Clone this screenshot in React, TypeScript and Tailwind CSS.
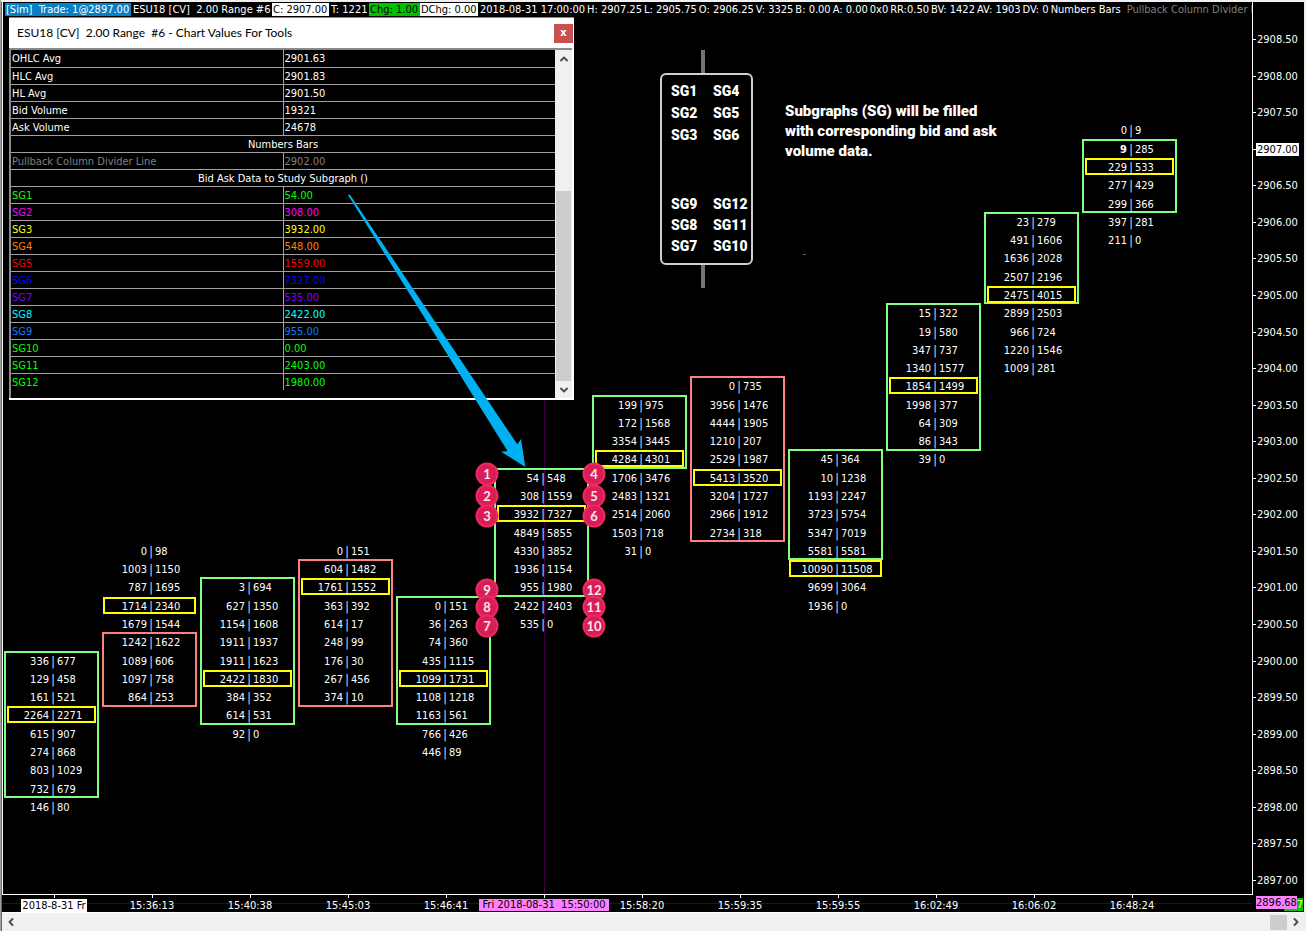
import React from 'react';
import { ChevronDown, ChevronLeft, ChevronRight, ChevronUp } from 'lucide-react';

type Bar = {
  time: string;
  top: number;
  rows: string[];
  box: [number, number];
  down?: boolean;
  poc: number;
};

const TICK = 0.25;
const MAX_PRICE = 2908.5;
const PX_PER_POINT = 73.13;

const bars: Bar[] = [
  {
    time: '2018-8-31 Fr',
    top: 2900,
    rows: ['336|677', '129|458', '161|521', '2264|2271', '615|907', '274|868', '803|1029', '732|679', '146|80'],
    box: [0, 7],
    poc: 3,
  },
  {
    time: '15:36:13',
    top: 2901.5,
    rows: ['0|98', '1003|1150', '787|1695', '1714|2340', '1679|1544', '1242|1622', '1089|606', '1097|758', '864|253'],
    box: [5, 8],
    down: true,
    poc: 3,
  },
  {
    time: '15:40:38',
    top: 2901,
    rows: ['3|694', '627|1350', '1154|1608', '1911|1937', '1911|1623', '2422|1830', '384|352', '614|531', '92|0'],
    box: [0, 7],
    poc: 5,
  },
  {
    time: '15:45:03',
    top: 2901.5,
    rows: ['0|151', '604|1482', '1761|1552', '363|392', '614|17', '248|99', '176|30', '267|456', '374|10'],
    box: [1, 8],
    down: true,
    poc: 2,
  },
  {
    time: '15:46:41',
    top: 2900.75,
    rows: ['0|151', '36|263', '74|360', '435|1115', '1099|1731', '1108|1218', '1163|561', '766|426', '446|89'],
    box: [0, 6],
    poc: 4,
  },
  {
    time: 'Fri 2018-08-31  15:50:00',
    top: 2902.5,
    rows: ['54|548', '308|1559', '3932|7327', '4849|5855', '4330|3852', '1936|1154', '955|1980', '2422|2403', '535|0'],
    box: [0, 6],
    poc: 2,
  },
  {
    time: '15:58:20',
    top: 2903.5,
    rows: ['199|975', '172|1568', '3354|3445', '4284|4301', '1706|3476', '2483|1321', '2514|2060', '1503|718', '31|0'],
    box: [0, 3],
    poc: 3,
  },
  {
    time: '15:59:35',
    top: 2903.75,
    rows: ['0|735', '3956|1476', '4444|1905', '1210|207', '2529|1987', '5413|3520', '3204|1727', '2966|1912', '2734|318'],
    box: [0, 8],
    down: true,
    poc: 5,
  },
  {
    time: '15:59:55',
    top: 2902.75,
    rows: ['45|364', '10|1238', '1193|2247', '3723|5754', '5347|7019', '5581|5581', '10090|11508', '9699|3064', '1936|0'],
    box: [0, 5],
    poc: 6,
  },
  {
    time: '16:02:49',
    top: 2904.75,
    rows: ['15|322', '19|580', '347|737', '1340|1577', '1854|1499', '1998|377', '64|309', '86|343', '39|0'],
    box: [0, 7],
    poc: 4,
  },
  {
    time: '16:06:02',
    top: 2906,
    rows: ['23|279', '491|1606', '1636|2028', '2507|2196', '2475|4015', '2899|2503', '966|724', '1220|1546', '1009|281'],
    box: [0, 4],
    poc: 4,
  },
  {
    time: '16:48:24',
    top: 2907.25,
    rows: ['0|9', '9|285', '229|533', '277|429', '299|366', '397|281', '211|0'],
    box: [1, 4],
    poc: 2,
  },
];

const LAST_PRICE = 2907;
const prices = Array.from({ length: 24 }, (_, i) => MAX_PRICE - i * 0.5);

const values = [
  { name: 'OHLC Avg', value: '2901.63', color: 'text-white' },
  { name: 'HLC Avg', value: '2901.83', color: 'text-white' },
  { name: 'HL Avg', value: '2901.50', color: 'text-white' },
  { name: 'Bid Volume', value: '19321', color: 'text-white' },
  { name: 'Ask Volume', value: '24678', color: 'text-white' },
  { name: 'Numbers Bars' },
  { name: 'Pullback Column Divider Line', value: '2902.00', color: 'text-[#808080]' },
  { name: 'Bid Ask Data to Study Subgraph ()' },
  { name: 'SG1', value: '54.00', color: 'text-[#00ff00]' },
  { name: 'SG2', value: '308.00', color: 'text-[#ff00ff]' },
  { name: 'SG3', value: '3932.00', color: 'text-[#ffff00]' },
  { name: 'SG4', value: '548.00', color: 'text-[#ff8000]' },
  { name: 'SG5', value: '1559.00', color: 'text-[#ff0000]' },
  { name: 'SG6', value: '7327.00', color: 'text-[#0000ff]' },
  { name: 'SG7', value: '535.00', color: 'text-[#8000ff]' },
  { name: 'SG8', value: '2422.00', color: 'text-[#00ffff]' },
  { name: 'SG9', value: '955.00', color: 'text-[#0080ff]' },
  { name: 'SG10', value: '0.00', color: 'text-[#00ff00]' },
  { name: 'SG11', value: '2403.00', color: 'text-[#00ff00]' },
  { name: 'SG12', value: '1980.00', color: 'text-[#00ff00]' },
];

const stats = [
  '2018-08-31 17:00:00',
  'H: 2907.25',
  'L: 2905.75',
  'O: 2906.25',
  'V: 3325',
  'B: 0.00',
  'A: 0.00',
  '0x0',
  'RR:0.50',
  'BV: 1422',
  'AV: 1903',
  'DV: 0',
  'Numbers Bars',
];

// badge centres in plot pixels
const badges = [
  { n: 1, x: 484, y: 457 },
  { n: 2, x: 484, y: 479 },
  { n: 3, x: 484, y: 499 },
  { n: 4, x: 591, y: 457 },
  { n: 5, x: 591, y: 479 },
  { n: 6, x: 591, y: 499 },
  { n: 9, x: 484, y: 573 },
  { n: 8, x: 484, y: 590 },
  { n: 7, x: 484, y: 609 },
  { n: 12, x: 591, y: 573 },
  { n: 11, x: 591, y: 590 },
  { n: 10, x: 591, y: 609 },
];

const yOf = (price: number) => (MAX_PRICE - price) * PX_PER_POINT + 22;

function StatusLine() {
  return (
    <header className="flex h-[15px] items-center overflow-hidden whitespace-pre pl-[2px] leading-[13px]">
      <span className="w-[126px] shrink-0 bg-[#0a80c4] pl-px">[Sim]  Trade: 1@2897.00</span>
      <span className="w-[141px] shrink-0 pl-[2px]">ESU18 [CV]  2.00 Range #6</span>
      <span className="w-[57px] shrink-0 bg-white pl-px text-black">C: 2907.00</span>
      <span className="w-[40px] shrink-0 pl-[2px]">T: 1221</span>
      <span className="w-[51px] shrink-0 bg-[#00c000] pl-px text-black">Chg: 1.00</span>
      <span className="w-[58px] shrink-0 bg-white pl-px text-black">DChg: 0.00</span>
      <div className="flex shrink-0 gap-[2px] pl-[2px]">
        {stats.map((s) => (
          <span key={s}>{s}</span>
        ))}
        <span className="pl-1 text-[#808080]">Pullback Column Divider Line</span>
      </div>
    </header>
  );
}

function NumbersBar({ bar }: { bar: Bar }) {
  const rowY = (i: number) => yOf(bar.top - i * TICK);
  const boxTop = Math.round(rowY(bar.box[0]) - 10);
  const boxBottom = Math.round(rowY(bar.box[1]) + 9.5);
  const pocInside = bar.poc >= bar.box[0] && bar.poc <= bar.box[1];

  return (
    <div className="relative h-full w-[98px] shrink-0">
      <div
        className={`absolute left-0 w-[95px] border-2 ${bar.down ? 'border-[#ff8080]' : 'border-[#80ff80]'}`}
        style={{ top: boxTop, height: boxBottom - boxTop }}
      />
      {bar.rows.map((row, i) => {
        const [bid, ask] = row.split('|');
        return (
          <div
            key={i}
            className="absolute left-0 flex w-[95px] leading-[18px]"
            style={{ top: Math.round(rowY(i) - 8) }}
          >
            <span className={`w-[45px] text-right ${bid === '9' ? 'font-bold' : ''}`}>{bid}</span>
            <span className="w-[8px] text-center text-[12px] text-[#cfe6ff]">|</span>
            <span>{ask}</span>
          </div>
        );
      })}
      <div
        className={`absolute h-[17px] border-2 border-[#ffff00] ${pocInside ? 'left-[3px] w-[89px]' : 'left-px w-[93px]'}`}
        style={{ top: Math.round(rowY(bar.poc) - 9.2) }}
      />
    </div>
  );
}

function ChartValues() {
  return (
    <section className="absolute left-[6px] top-0 flex h-[383px] w-[565px] flex-col border-t border-[#4a9ac8] bg-white">
      <div className="flex h-[30px] shrink-0 items-center justify-between pl-2 pr-px">
        <h1 className="whitespace-pre font-['Lato'] text-[12px] text-black">
          ESU18 [CV]  2.00 Range  #6 - Chart Values For Tools
        </h1>
        <button
          aria-label="Close"
          className="flex h-[19px] w-[19px] items-center justify-center bg-[#c75050] pb-[2px] text-[11px] font-bold leading-none text-white"
        >
          x
        </button>
      </div>
      <div className="mb-[2px] mr-[2px] flex min-h-0 flex-1 border-l-2 border-t-2 border-[#8a8a8a]">
        <div className="flex-1 bg-black">
          <table className="w-full table-fixed border-collapse leading-[14px]">
            <tbody>
              {values.map((v, i) => (
                <tr key={v.name} className={i < values.length - 1 ? 'h-[17px] border-b border-[#a0a0a0]' : 'h-[17px]'}>
                  {v.value ? (
                    <>
                      <th scope="row" className={`border-r border-[#a0a0a0] p-0 pl-px pt-[2px] text-left font-normal ${v.color}`}>
                        {v.name}
                      </th>
                      <td className={`p-0 pl-px pt-[2px] ${v.color}`}>{v.value}</td>
                    </>
                  ) : (
                    <th colSpan={2} className="p-0 pt-[2px] text-center font-normal">
                      {v.name}
                    </th>
                  )}
                </tr>
              ))}
            </tbody>
          </table>
        </div>
        <div className="flex w-[17px] flex-col bg-[#f0f0f0] text-[#505050]">
          <button aria-label="Scroll up" className="flex h-[17px] items-center justify-center">
            <ChevronUp size={12} strokeWidth={4} />
          </button>
          <div className="flex flex-1 flex-col justify-end">
            <div className="ml-px mr-px h-[190px] bg-[#cdcdcd]" />
          </div>
          <button aria-label="Scroll down" className="flex h-[17px] items-center justify-center">
            <ChevronDown size={12} strokeWidth={4} />
          </button>
        </div>
      </div>
    </section>
  );
}

function SubgraphLegend() {
  return (
    <figure className="absolute left-[657px] top-[33px] flex items-start gap-[32px] font-['Roboto'] font-black">
      <div className="flex w-[93px] flex-col items-center">
        <div className="mr-2 h-[23px] w-[4px] bg-[#757575]" />
        <div className="flex h-[192px] w-full flex-col justify-between rounded-[6px] border-2 border-[#cfcfcf] pb-[6px] pl-[9px] pt-[5px] text-[14px]">
          <div className="grid grid-cols-[42px_1fr] leading-[22px]">
            <span>SG1</span>
            <span>SG4</span>
            <span>SG2</span>
            <span>SG5</span>
            <span>SG3</span>
            <span>SG6</span>
          </div>
          <div className="grid grid-cols-[42px_1fr] leading-[21px]">
            <span>SG9</span>
            <span>SG12</span>
            <span>SG8</span>
            <span>SG11</span>
            <span>SG7</span>
            <span>SG10</span>
          </div>
        </div>
        <div className="mr-2 h-[23px] w-[4px] bg-[#757575]" />
      </div>
      <figcaption className="pt-[51px] text-[15px] leading-[20px]">
        Subgraphs (SG) will be filled
        <br />
        with corresponding bid and ask
        <br />
        volume data.
      </figcaption>
    </figure>
  );
}

function Plot() {
  return (
    <div className="relative min-h-0 flex-1 overflow-hidden">
      <div className="absolute left-[541px] top-0 h-full w-px bg-[#400040]" />
      <div className="flex h-full pl-px">
        {bars.map((bar) => (
          <NumbersBar key={bar.time} bar={bar} />
        ))}
      </div>
      <ChartValues />
      <SubgraphLegend />
      <div className="absolute left-[800px] top-[237px] h-px w-[3px] bg-[#606060]" />
      <svg className="absolute left-[345px] top-[177px]" width="180" height="274" viewBox="0 0 180 274" fill="#00b0f0">
        <path d="M0 1 L1.8 0.6 L169.3 250.3 L173 245 L177.3 273 L153 257.7 L159.5 257 Z" />
      </svg>
      {badges.map((b) => (
        <span
          key={b.n}
          className="absolute flex h-[23px] w-[23px] -translate-x-1/2 -translate-y-1/2 items-center justify-center rounded-full border-2 border-[#f0285f] bg-[#d81e56] font-['Lato'] text-[13px] font-bold text-[#fde4ec]"
          style={{ left: b.x, top: b.y }}
        >
          {b.n}
        </span>
      ))}
    </div>
  );
}

function PriceAxis() {
  return (
    <aside className="w-[52px] shrink-0 border-l border-white pt-[15px]">
      <div className="relative">
        {prices.map((p) => (
          <div
            key={p}
            className="absolute left-0 flex items-center leading-[13px]"
            style={{ top: Math.round(yOf(p) - 6) }}
          >
            <span className="w-[3px] border-t border-white" />
            <span className={p === LAST_PRICE ? 'bg-white px-px text-black' : 'px-px'}>{p.toFixed(2)}</span>
          </div>
        ))}
      </div>
    </aside>
  );
}

function TimeAxis() {
  return (
    <div className="relative flex h-[17px] justify-between overflow-hidden bg-black">
      <div className="absolute left-0 top-[8px] h-px w-[calc(100%-52px)] bg-[#400040]" />
      <div className="flex pl-[3px]">
        {bars.map((bar, i) => (
          <div key={bar.time} className="relative flex w-[98px] shrink-0 flex-col items-center gap-px">
            <div className="h-[3px] w-px bg-white" />
            <span
              className={
                i === 0
                  ? 'bg-white px-px leading-[13px] text-black'
                  : i === 5
                    ? 'whitespace-pre bg-[#ff80ff] px-[3px] leading-[12px] text-black'
                    : 'leading-[13px]'
              }
            >
              {bar.time}
            </span>
          </div>
        ))}
      </div>
      <div className="relative flex w-[48px] items-start pt-px">
        <span className="z-10 bg-[#ff80ff] leading-[13px] text-black">2896.68</span>
        <span className="absolute right-px top-[3px] w-[19px] bg-[#00c800] text-right leading-[13px] text-[#ffff80]">
          7
        </span>
      </div>
    </div>
  );
}

export default function App() {
  return (
    <main className="flex h-screen flex-col overflow-hidden border-l border-[#a0a0a0] bg-[#f0f0f0] pr-[2px] pt-[2px] font-['DejaVu_Sans_Condensed','DejaVu_Sans',sans-serif] text-[11px] text-white">
      <div className="flex min-h-0 flex-1 flex-col border-l border-[#696969]">
        <div className="flex min-h-0 flex-1 bg-black">
          <div className="flex min-w-0 flex-1 flex-col border-b border-l border-white">
            <StatusLine />
            <Plot />
          </div>
          <PriceAxis />
        </div>
        <TimeAxis />
        <div className="flex h-[19px] items-center border-t border-white text-[#505050]">
          <button aria-label="Scroll left" className="flex w-[17px] justify-center">
            <ChevronLeft size={12} strokeWidth={4} />
          </button>
          <div className="flex flex-1 justify-end">
            <div className="h-[15px] w-[17px] bg-[#cdcdcd]" />
          </div>
          <button aria-label="Scroll right" className="flex w-[17px] justify-center">
            <ChevronRight size={12} strokeWidth={4} />
          </button>
        </div>
      </div>
    </main>
  );
}
